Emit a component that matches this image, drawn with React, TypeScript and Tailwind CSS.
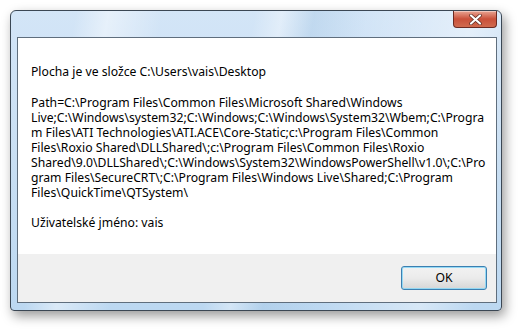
const lines = [
  'Path=C:\\Program Files\\Common Files\\Microsoft Shared\\Windows',
  'Live;C:\\Windows\\system32;C:\\Windows;C:\\Windows\\System32\\Wbem;C:\\Progra',
  'm Files\\ATI Technologies\\ATI.ACE\\Core-Static;c:\\Program Files\\Common',
  'Files\\Roxio Shared\\DLLShared\\;c:\\Program Files\\Common Files\\Roxio',
  'Shared\\9.0\\DLLShared\\;C:\\Windows\\System32\\WindowsPowerShell\\v1.0\\;C:\\Pro',
  'gram Files\\SecureCRT\\;C:\\Program Files\\Windows Live\\Shared;C:\\Program',
  'Files\\QuickTime\\QTSystem\\',
];

export default function App() {
  return (
    <div className="w-[522px] h-[330px] bg-white pl-[10px] pt-[10px] overflow-hidden" style={{ fontFamily: '"Noto Sans", "Open Sans", sans-serif' }}>
      {/* Window frame */}
      <div className="w-[492px] h-[301px] rounded-t-[6px] rounded-b-[4px] border border-[#3b4754] bg-gradient-to-b from-[#d3e5f7] via-[#c9dff3] to-[#bcd8f1] shadow-[3px_5px_12px_rgba(0,0,0,0.4)] flex flex-col pl-[6px] pr-[4px] pb-[7px] relative overflow-hidden">
        {/* glass streaks */}
        <div className="absolute inset-0 pointer-events-none bg-[linear-gradient(100deg,transparent_0%,transparent_12%,rgba(255,255,255,0.45)_18%,transparent_28%,transparent_45%,rgba(255,255,255,0.35)_50%,rgba(160,195,225,0.35)_56%,transparent_66%,rgba(255,255,255,0.4)_85%,transparent_95%)]" />

        {/* Title bar */}
        <div className="h-[26px] flex justify-end items-start relative">
          <button className="w-[44px] h-[17px] rounded-b-[4px] border border-[#6b2a22] border-t-0 bg-gradient-to-b from-[#e8a493] via-[#c9503a] to-[#d06a4f] flex items-center justify-center shadow-[inset_0_1px_0_rgba(255,255,255,0.4)]">
            <svg width="13" height="11" viewBox="0 0 13 11">
              <path d="M2 1.5 L11 9.5 M11 1.5 L2 9.5" stroke="#5a2a22" strokeWidth="3.6" strokeLinecap="round" />
              <path d="M2 1.5 L11 9.5 M11 1.5 L2 9.5" stroke="#ffffff" strokeWidth="2.2" strokeLinecap="round" />
            </svg>
          </button>
        </div>

        {/* Client area */}
        <div className="flex-1 border border-[#5f6e7d] bg-white flex flex-col relative">
          <div className="flex-1 pl-[13px] pt-[26px] text-[12.2px] leading-[15px] text-black">
            <div>Plocha je ve složce C:\Users\vais\Desktop</div>
            <div className="h-[16px]" />
            {lines.map((l) => (
              <div key={l} className="whitespace-pre">{l}</div>
            ))}
            <div className="h-[15px]" />
            <div>Uživatelské jméno: vais</div>
          </div>
          <div className="h-[48px] bg-[#f0f0f0] flex justify-end items-start pt-[12px] pr-[9px]">
            <button className="w-[86px] h-[24px] rounded-[3px] border border-[#3c7fb1] bg-gradient-to-b from-[#f2f2f2] via-[#ebebeb] to-[#d6d6d6] shadow-[inset_0_0_0_1px_rgba(140,215,245,0.9)] text-[12.2px] text-black">
              OK
            </button>
          </div>
        </div>
      </div>
    </div>
  );
}
